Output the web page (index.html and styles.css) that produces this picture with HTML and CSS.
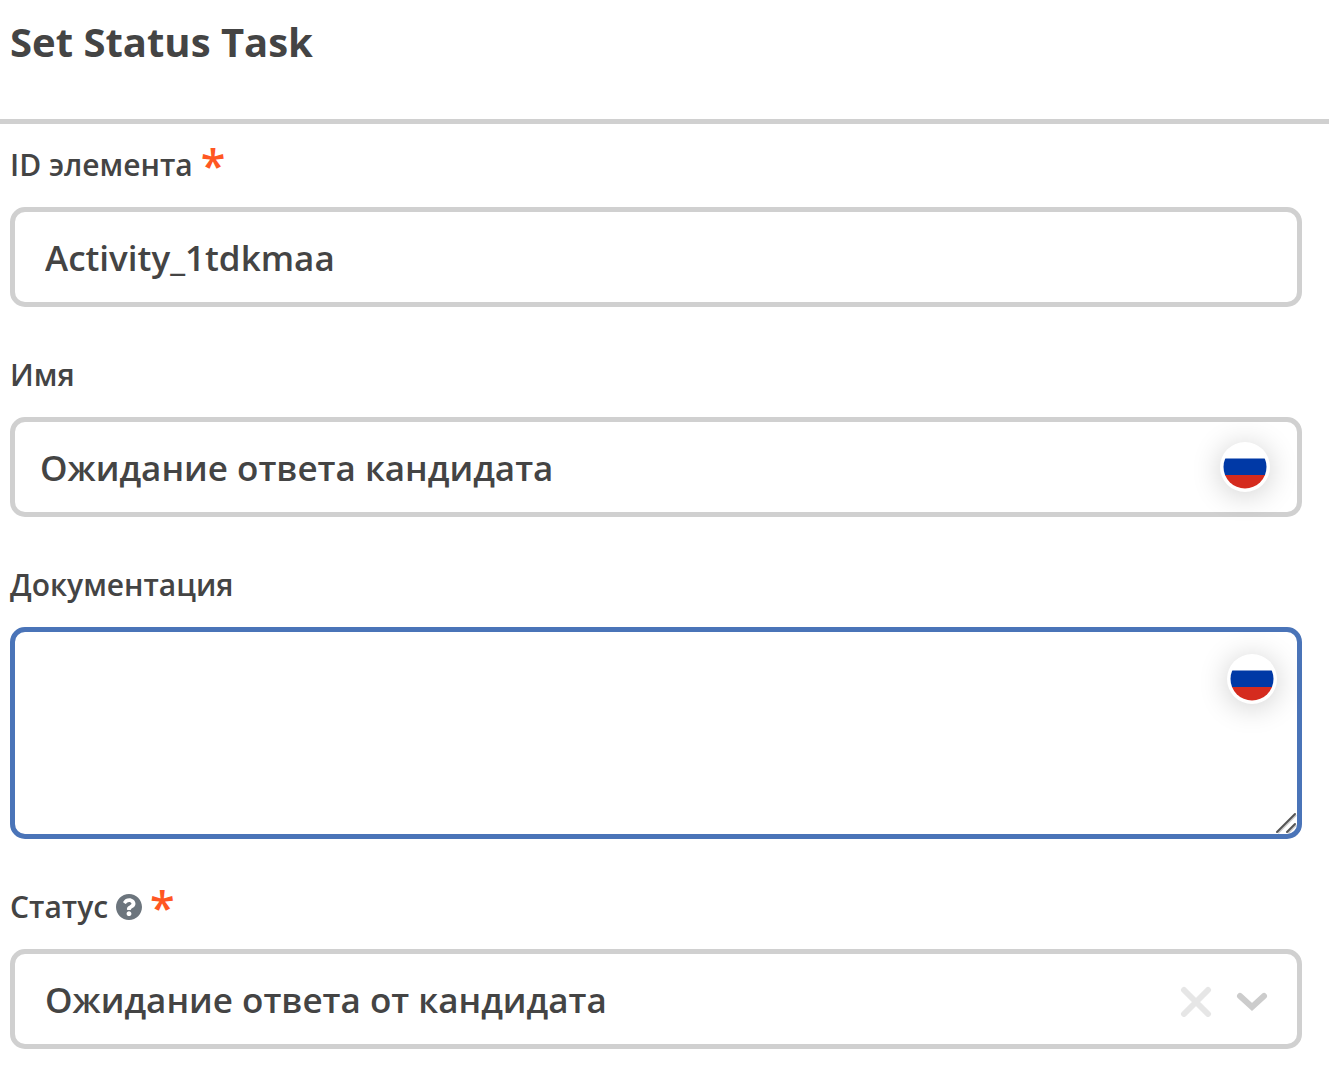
FILE: index.html
```html
<!DOCTYPE html>
<html lang="ru">
<head>
<meta charset="utf-8">
<meta name="viewport" content="width=device-width, initial-scale=1">
<title>Set Status Task</title>
<link rel="stylesheet" href="styles.css">
</head>
<body>
<header class="panel-header"><h1 class="panel-title">Set Status Task</h1></header>
<form class="panel-form">
  <div class="field">
    <div class="field-head"><label for="element-id">ID элемента</label><span class="required">*</span></div>
    <div class="box"><input class="control" id="element-id" type="text" value="Activity_1tdkmaa" required></div>
  </div>
  <div class="field">
    <div class="field-head"><label for="name">Имя</label></div>
    <div class="box box-localized"><input class="control" id="name" type="text" value="Ожидание ответа кандидата">
      <button class="flag" type="button" aria-label="Русский"><svg viewBox="0 0 44 44"><use href="#flag-ru"/></svg></button>
    </div>
  </div>
  <div class="field">
    <div class="field-head"><label for="docs">Документация</label></div>
    <div class="box box-area"><textarea class="control area" id="docs"></textarea>
      <button class="flag flag-area" type="button" aria-label="Русский"><svg viewBox="0 0 44 44"><use href="#flag-ru"/></svg></button>
      <svg class="grip" viewBox="0 0 22 22" aria-hidden="true"><path d="M3 21 21 3M13 21l8-8" stroke="#ccc" stroke-width="2"/><path d="M2 20 20 2M12 20l8-8" stroke="#555" stroke-width="2" stroke-linecap="round"/></svg>
    </div>
  </div>
  <div class="field">
    <div class="field-head"><label for="status">Статус</label>
      <svg class="help" viewBox="8 8 496 496" role="img" aria-label="Справка"><path fill="#6c757d" d="M504 256c0 136.997-111.043 248-248 248S8 392.997 8 256C8 119.083 119.043 8 256 8s248 111.083 248 248zM262.655 90c-54.497 0-89.255 22.957-116.549 63.758-3.536 5.286-2.353 12.415 2.715 16.258l34.699 26.31c5.205 3.947 12.621 3.008 16.665-2.122 17.864-22.658 30.113-35.797 57.303-35.797 20.429 0 45.698 13.148 45.698 32.958 0 14.976-12.363 22.667-32.534 33.976C247.128 238.528 216 254.941 216 296v4c0 6.627 5.373 12 12 12h56c6.627 0 12-5.373 12-12v-1.333c0-28.462 83.186-29.647 83.186-106.667 0-58.002-60.165-102-116.531-102zM256 338c-25.365 0-46 20.635-46 46 0 25.364 20.635 46 46 46s46-20.636 46-46c0-25.365-20.635-46-46-46z"/></svg>
      <span class="required">*</span></div>
    <div class="box box-select">
      <select class="control" id="status" required><option>Ожидание ответа от кандидата</option></select>
      <button class="clear" type="button" aria-label="Очистить"><svg viewBox="0 0 36 36"><path d="m6 9 24 24M30 9 6 33"/></svg></button>
      <svg class="chevron" viewBox="0 0 36 36" aria-hidden="true"><path d="m6 15 12 11 12-11"/></svg>
    </div>
  </div>
</form>
<svg class="symbols" aria-hidden="true"><symbol id="flag-ru" viewBox="0 0 44 44"><clipPath id="disc"><circle cx="22" cy="22" r="21.5"/></clipPath><g clip-path="url(#disc)"><path fill="#fff" d="M0 0h44v14H0z"/><path fill="#0039a6" d="M0 13.5h44V30H0z"/><path fill="#d52b1e" d="M0 30h44v14H0z"/></g></symbol></svg>
</body>
</html>
```
FILE: styles.css
```css
* { box-sizing: border-box; }
body { margin: 0; background: #fff; color: #444; font-family: "Open Sans", sans-serif; font-weight: 600; }
.panel-header { height: 124px; padding: 14px 10px; border-bottom: 5px solid #d0d0d0; }
.panel-title { margin: 0; font-size: 40px; line-height: 56px; font-weight: 700; }
.panel-form { display: flex; flex-direction: column; gap: 44px; padding: 17px 27px 36px 10px; }
.field { display: flex; flex-direction: column; gap: 18px; }
.field-head { display: flex; align-items: center; gap: 8px; height: 48px; font-size: 30px; line-height: 48px; }
.required { color: #ff5722; font-size: 45px; line-height: 48px; }
.box { position: relative; display: flex; align-items: center; min-height: 100px; padding: 0 30px; border: 5px solid #d0d0d0; border-radius: 15px; }
.box-localized { padding: 0 27px 0 25px; }
.box-select { padding-right: 27px; }
.control { flex: 1; min-width: 0; height: 90px; padding: 0; border: 0; outline: 0; background: transparent; color: inherit; font: inherit; font-size: 35px; appearance: none; }
.box-area { min-height: 212px; padding: 0; border-color: #4a74b8; }
.area { height: 202px; padding: 20px 90px 20px 25px; resize: none; }
.flag { width: 50px; height: 50px; padding: 3px; border: 0; border-radius: 50%; background: #fff; box-shadow: 0 3px 30px rgb(0 0 0 / 20%); }
.flag svg { display: block; width: 44px; height: 44px; }
.flag-area { position: absolute; top: 22px; right: 20px; }
.grip { position: absolute; right: 0; bottom: 0; width: 22px; height: 22px; }
.help { width: 26px; height: 26px; }
.clear { width: 36px; height: 36px; padding: 0; border: 0; background: none; }
.clear svg, .chevron { display: block; width: 36px; height: 36px; fill: none; stroke: #e6e6e6; stroke-width: 6; stroke-linecap: round; }
.chevron { margin-left: 20px; stroke: #ccc; }
.symbols { position: absolute; width: 0; height: 0; }
```
